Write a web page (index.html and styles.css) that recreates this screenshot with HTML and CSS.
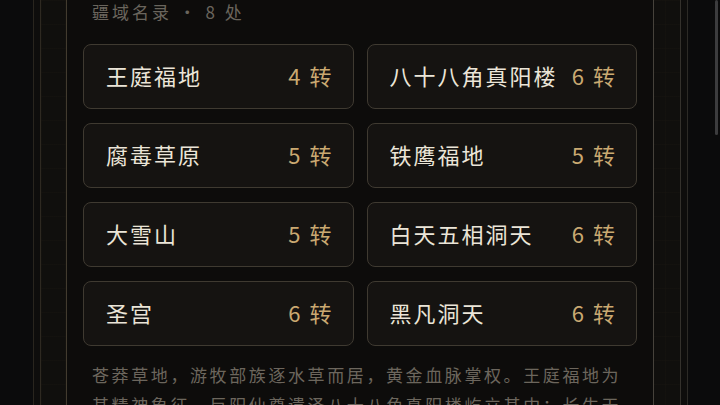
FILE: index.html
```html
<!DOCTYPE html>
<html lang="zh-CN">
<head>
    <meta charset="UTF-8">
    <meta name="viewport" content="width=device-width, initial-scale=1.0">
    <title>疆域名录</title>
    <link rel="stylesheet" href="styles.css">
</head>
<body>
    <div class="shell">
        <div class="rail">
            <main class="panel">
                <div class="section-title">疆域名录 · 8 处</div>
                <div class="region-grid">
                    <div class="region-card"><span class="region-name">王庭福地</span><span class="region-rank">4 转</span></div>
                    <div class="region-card"><span class="region-name">八十八角真阳楼</span><span class="region-rank">6 转</span></div>
                    <div class="region-card"><span class="region-name">腐毒草原</span><span class="region-rank">5 转</span></div>
                    <div class="region-card"><span class="region-name">铁鹰福地</span><span class="region-rank">5 转</span></div>
                    <div class="region-card"><span class="region-name">大雪山</span><span class="region-rank">5 转</span></div>
                    <div class="region-card"><span class="region-name">白天五相洞天</span><span class="region-rank">6 转</span></div>
                    <div class="region-card"><span class="region-name">圣宫</span><span class="region-rank">6 转</span></div>
                    <div class="region-card"><span class="region-name">黑凡洞天</span><span class="region-rank">6 转</span></div>
                </div>
                <p class="region-desc">苍莽草地，游牧部族逐水草而居，黄金血脉掌权。王庭福地为其精神象征，巨阳仙尊遗泽八十八角真阳楼屹立其中；长生天下，诸部征伐不休，强者为尊。</p>
            </main>
        </div>
    </div>
    <div class="scroll-thumb"></div>
</body>
</html>
```

FILE: styles.css
```css
/* General Reset */
body, html {
    margin: 0;
    padding: 0;
    height: 100%;
    overflow: hidden;
    background-color: #0b0b0c;
    font-family: "Noto Sans CJK SC", "Noto Sans", sans-serif;
}

/* Outer double frame */
.shell {
    box-sizing: border-box;
    width: 655px;
    height: 100%;
    margin-left: 33px;
    padding: 0 6px;
    border-left: 1px solid #29251e;
    border-right: 1px solid #2c2a26;
    background-color: #0e0d0c;
}

.rail {
    box-sizing: border-box;
    height: 100%;
    padding: 0 26px 0 25px;
    border-left: 1px solid #2e2921;
    border-right: 1px solid #34312c;
    background-color: #100f0d;
    background-image:
        linear-gradient(to right, rgba(120, 100, 60, 0.04) 1px, transparent 1px),
        linear-gradient(to bottom, rgba(120, 100, 60, 0.04) 1px, transparent 1px);
    background-size: 24px 24px;
}

/* Main content panel */
.panel {
    box-sizing: border-box;
    height: 100%;
    padding: 0 16px;
    border-left: 1px solid #423b2f;
    border-right: 1px solid #46423b;
    background-color: #0d0c0b;
}

.section-title {
    box-sizing: border-box;
    height: 22px;
    padding: 2px 0 0 9px;
    font-size: 17px;
    line-height: 20px;
    letter-spacing: 3px;
    color: #6a655d;
}

.region-grid {
    margin-top: 22px;
    display: grid;
    grid-template-columns: 1fr 1fr;
    grid-auto-rows: 65px;
    column-gap: 13px;
    row-gap: 14px;
}

.region-card {
    box-sizing: border-box;
    display: flex;
    justify-content: space-between;
    align-items: center;
    padding: 0 19px 3px 22px;
    border: 1.5px solid #3f3a31;
    border-radius: 8px;
    background-color: #151311;
    font-size: 22px;
    letter-spacing: 2px;
}

.region-name {
    color: #ebe5d8;
}

.region-rank {
    color: #caa971;
}

.region-desc {
    margin: 14px 0 0;
    padding: 0 8px 0 9px;
    font-size: 17px;
    line-height: 30px;
    letter-spacing: 2.6px;
    color: #6c665d;
}

/* Overlay scrollbar */
.scroll-thumb {
    position: fixed;
    top: 0;
    right: 2px;
    width: 3px;
    height: 135px;
    border-radius: 2px;
    background-color: #3c3c3e;
}
```
